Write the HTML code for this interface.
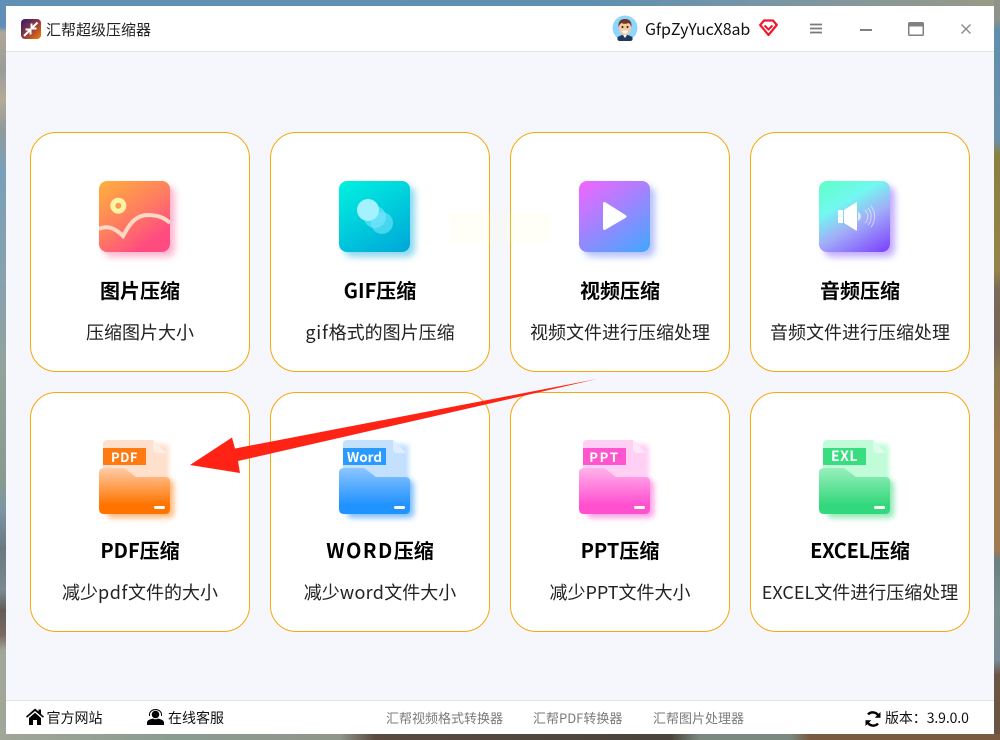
<!DOCTYPE html>
<html lang="zh"><head><meta charset="utf-8"><title>汇帮超级压缩器</title>
<style>
*{box-sizing:border-box;margin:0;padding:0}
html,body{width:1000px;height:740px;overflow:hidden}
body{position:relative;background:#7a8a88;font-family:"Noto Sans CJK SC","Liberation Sans",sans-serif;color:#111}
.abs,.card,.t,svg{position:absolute}
em{font-style:normal}
.bgt{left:0;top:0;width:1000px;height:7px;background:linear-gradient(90deg,#6090b4 0,#6090b0 60%,#7a96a4 78%,#9a9a86 100%)}
.bgl{left:0;top:0;width:6px;height:740px;background:linear-gradient(180deg,#6090b8 0,#6090b8 27px,#b0a898 32px,#9a9c98 70px,#b4aa98 100px,#909a9c 130px,#7a9fb8 170px,#8aa2ac 300px,#93a39b 370px,#8a9a90 480px,#7a96a4 510px,#6a7880 550px,#7a8a90 590px,#645c58 610px,#7a6a60 635px,#a0a698 650px,#a0a698 740px)}
.bgr{left:994px;top:0;width:6px;height:740px;background:linear-gradient(180deg,#8f9288 0,#8f9288 20px,#5f8fb0 30px,#6a90a8 140px,#8a8040 155px,#94844a 270px,#7a6a58 290px,#78665a 345px,#8a7a50 370px,#a07a50 440px,#a07a50 550px,#6a8080 560px,#7a9090 610px,#7a8a98 660px,#6a5545 675px,#6a5545 740px)}
.bgb{left:0;top:734px;width:1000px;height:6px;background:linear-gradient(90deg,#a0a698 0,#8a9c90 170px,#90968a 340px,#5a4a40 375px,#4a443c 670px,#7a8a80 700px,#7a8a80 790px,#7a5a40 810px,#7a5a40 100%)}
.win{left:6px;top:6px;width:988px;height:728px;background:#f6f7fc}
.head{left:6px;top:6px;width:988px;height:46px;background:#fff;border-bottom:1px solid #e3e4e8}
.foot{left:6px;top:700px;width:988px;height:34px;background:#fff;border-top:1px solid #e3e4e8}
.card{width:220px;height:240px;background:#fff;border:1px solid #f7a90c;border-radius:26px;text-align:center}
.card b{position:absolute;left:-1px;width:220px;top:143px;font-size:20px;line-height:28px;font-weight:700;color:#000;white-space:nowrap}
.card span{position:absolute;left:-1px;width:220px;top:186px;font-size:18px;line-height:26px;color:#222;white-space:nowrap}
.t{white-space:nowrap;line-height:20px}
.ico{width:71px;height:71px;border-radius:8px}
.lb{position:absolute;width:43px;height:17px;color:#fff;font-weight:700;font-size:13px;line-height:17px;text-align:center}
</style></head><body>
<div class="abs bgt"></div><div class="abs bgl"></div><div class="abs bgr"></div><div class="abs bgb"></div>
<div class="abs win"></div>
<div class="abs head"></div>

<svg style="left:21px;top:19px" width="20" height="20" viewBox="0 0 20 20">
<defs><linearGradient id="lg" x1="0" y1="0" x2="1" y2="1"><stop offset="0" stop-color="#33186e"/><stop offset=".5" stop-color="#8a3a40"/><stop offset="1" stop-color="#ff7a00"/></linearGradient></defs>
<rect width="20" height="20" rx="4" fill="url(#lg)"/>
<path d="M16.500 3.500L11.500 8.500M10.500 4.500V9.500H15.500M3 17L8.500 11.500M4.500 10.500H9.500V15.500" stroke="#fff" stroke-width="2" fill="none"/>
</svg>
<div class="t" style="left:46px;top:20px;font-size:15px;color:#222">汇帮超级压缩器</div>

<svg style="left:612px;top:15px" width="26" height="26" viewBox="0 0 26 26">
<circle cx="13" cy="13" r="12.500" fill="#8fd6ff"/>
<path d="M5.500 25a12.500 12.500 0 0 0 15 0V22L16 20H10L5.500 22z" fill="#1f3a5c"/>
<path d="M11 20l2 3 2-3z" fill="#fff"/>
<ellipse cx="13" cy="13" rx="6" ry="7" fill="#f6c9a4"/>
<path d="M6.500 12C6 5 10 4 13 4s7 1 6.500 8c-1-2-1.500-3.500-3-4-2 1-5 1-7 0-1.500 1-2 2-3 4z" fill="#6a3a22"/>
<circle cx="10.500" cy="12" r="1" fill="#2a1a10"/><circle cx="15.500" cy="12" r="1" fill="#2a1a10"/>
<path d="M10 15.500h6a3 3 0 0 1-6 0z" fill="#fff"/>
</svg>
<div class="t" style="left:645px;top:18px;font-size:16px;color:#111;letter-spacing:-.1px">GfpZyYucX8ab</div>
<svg style="left:759px;top:19px" width="19" height="18" viewBox="0 0 19 18">
<path d="M5 1.500H14L17.800 6 9.500 16 1.200 6z" fill="none" stroke="#f0182c" stroke-width="2.200" stroke-linejoin="round"/>
<path d="M5.500 6.500L9.500 10.500 13.500 6.500" fill="none" stroke="#f0182c" stroke-width="2"/>
</svg>
<svg style="left:810px;top:23px" width="12" height="11" viewBox="0 0 12 11"><path d="M0 1.500H12M0 5.500H12M0 9.500H12" stroke="#7a7a7a" stroke-width="1.700"/></svg>
<div class="abs" style="left:860px;top:29px;width:12px;height:2px;background:#808080"></div>
<svg style="left:908px;top:22px" width="16" height="14" viewBox="0 0 16 14"><rect x=".75" y=".75" width="14.500" height="12.500" rx="1" fill="#fff" stroke="#808080" stroke-width="1.500"/><rect x="1" y="1" width="14" height="3.500" fill="#808080"/></svg>
<svg style="left:961px;top:24px" width="10" height="10" viewBox="0 0 10 10"><path d="M.5.500L9.500 9.500M9.500.500L.5 9.500" stroke="#8a8a8a" stroke-width="1.400"/></svg>

<div class="card" style="left:30px;top:132px"><b>图片压缩</b><span>压缩图片大小</span></div>
<div class="card" style="left:270px;top:132px"><b>GIF压缩</b><span><em style="letter-spacing:.8px">gif</em>格式的图片压缩</span></div>
<div class="card" style="left:510px;top:132px"><b>视频压缩</b><span>视频文件进行压缩处理</span></div>
<div class="card" style="left:750px;top:132px"><b>音频压缩</b><span>音频文件进行压缩处理</span></div>
<div class="card" style="left:30px;top:392px"><b>PDF压缩</b><span>减少<em style="letter-spacing:.6px">pdf</em>文件的大小</span></div>
<div class="card" style="left:270px;top:392px"><b><em style="letter-spacing:1.500px">WORD</em>压缩</b><span>减少<em style="letter-spacing:.3px">word</em>文件大小</span></div>
<div class="card" style="left:510px;top:392px"><b>PPT压缩</b><span>减少PPT文件大小</span></div>
<div class="card" style="left:750px;top:392px"><b><em style="letter-spacing:-.3px">EXCEL</em>压缩</b><span>EXCEL文件进行压缩处理</span></div>

<div class="abs" style="left:450px;top:213px;width:100px;height:30px;background:rgba(255,255,190,.11)"></div>

<!-- image -->
<div class="abs ico" style="left:99px;top:181px;background:linear-gradient(145deg,#ffb03c 0,#ff7a62 50%,#ff4c80 80%);box-shadow:5px 5px 7px rgba(255,90,150,.45)"></div>
<svg style="left:99px;top:181px" width="71" height="71" viewBox="0 0 71 71">
<circle cx="19.300" cy="24.700" r="5.500" fill="#ff9a50" stroke="#fff3a4" stroke-width="5"/>
<path d="M0 48C8 44 16 47 24 55C30 44 36 34 49 34C58 34 66 37 71 42" fill="none" stroke="#fcd9c4" stroke-width="4"/>
</svg>
<!-- gif -->
<div class="abs ico" style="left:339px;top:181px;background:linear-gradient(150deg,#00f2e0 0,#00a6d8 100%);box-shadow:5px 5px 7px rgba(0,170,220,.45)"></div>
<svg style="left:339px;top:181px" width="71" height="71" viewBox="0 0 71 71">
<circle cx="43" cy="42" r="11" fill="#7ee8ff" opacity=".55"/>
<circle cx="36" cy="36" r="11" fill="#7ee8ff" opacity=".6"/>
<circle cx="29" cy="29" r="11" fill="#a4f2ff"/>
</svg>
<!-- video -->
<div class="abs ico" style="left:579px;top:181px;background:linear-gradient(145deg,#f464ff 0,#40a8ff 100%);box-shadow:5px 5px 7px rgba(90,120,255,.45)"></div>
<svg style="left:579px;top:181px" width="71" height="71" viewBox="0 0 71 71"><path d="M25.500 22.500L46 35.500 25.500 47.500z" fill="#fff" stroke="#fff" stroke-width="3" stroke-linejoin="round"/></svg>
<!-- audio -->
<div class="abs ico" style="left:819px;top:181px;background:linear-gradient(150deg,#5effc4 0,#72f8f0 32%,#a2aef8 58%,#7a3cff 100%);box-shadow:5px 5px 7px rgba(120,70,255,.45)"></div>
<svg style="left:819px;top:181px" width="71" height="71" viewBox="0 0 71 71">
<path d="M19 29H24V42H19z" fill="#fff"/><path d="M25 29L37 21.500Q38 21 38 22V49Q38 50 37 49.500L25 42z" fill="#fff"/>
<path d="M39 31a5 5 0 0 1 0 9" fill="#fff" opacity=".7"/>
<path d="M46 29a9 9 0 0 1 0 13M49 27a13 13 0 0 1 0 17M52 25a17 17 0 0 1 0 21" fill="none" stroke="#fff" stroke-width="1" opacity=".55"/>
</svg>

<!-- pdf -->
<svg style="left:89px;top:430px" width="100" height="100" viewBox="0 0 100 100">
<defs>
<filter id="b" x="-30%" y="-30%" width="160%" height="160%"><feGaussianBlur stdDeviation="3"/></filter>
<filter id="c" x="-30%" y="-30%" width="160%" height="160%"><feGaussianBlur stdDeviation="2.500"/></filter>
<linearGradient id="g1" x1="0" y1="0" x2="0" y2="1"><stop offset="0" stop-color="#ffcba6"/><stop offset=".8" stop-color="#ff7400"/></linearGradient>
<linearGradient id="g2" x1="0" y1="0" x2="0" y2="1"><stop offset="0" stop-color="#8cc5ff"/><stop offset=".8" stop-color="#2193ff"/></linearGradient>
<linearGradient id="g3" x1="0" y1="0" x2="0" y2="1"><stop offset="0" stop-color="#ffb2ea"/><stop offset=".8" stop-color="#ff50d0"/></linearGradient>
<linearGradient id="g4" x1="0" y1="0" x2="0" y2="1"><stop offset="0" stop-color="#98efbc"/><stop offset=".8" stop-color="#34d87c"/></linearGradient>
</defs>
<rect x="20" y="14" width="60" height="42" rx="4" fill="#ffe0cc" filter="url(#c)"/>
<rect x="18" y="50" width="67" height="38" rx="5" fill="#ff8a20" opacity=".6" filter="url(#b)"/>
<path d="M18 10H64L77 23V60H14V14q0-4 4-4z" fill="#ffe0cc"/><path d="M64 10L77 23H68q-4 0-4-4z" fill="#ffeee3"/>
<path d="M10 43q0-5 5-5H35L47 47H76q5 0 5 5V79q0 5-5 5H15q-5 0-5-5z" fill="url(#g1)"/>
<rect x="65" y="76" width="11" height="3" rx="1.500" fill="#fff"/>
</svg>
<div class="lb" style="left:103px;top:448px;background:#ff7a10;letter-spacing:.5px">PDF</div>
<!-- word -->
<svg style="left:329px;top:430px" width="100" height="100" viewBox="0 0 100 100">
<rect x="20" y="14" width="60" height="42" rx="4" fill="#c4e0ff" filter="url(#c)"/>
<rect x="18" y="50" width="67" height="38" rx="5" fill="#2a95ff" opacity=".6" filter="url(#b)"/>
<path d="M18 10H64L77 23V60H14V14q0-4 4-4z" fill="#c4e0ff"/><path d="M64 10L77 23H68q-4 0-4-4z" fill="#deedff"/>
<path d="M10 43q0-5 5-5H35L47 47H76q5 0 5 5V79q0 5-5 5H15q-5 0-5-5z" fill="url(#g2)"/>
<rect x="65" y="76" width="11" height="3" rx="1.500" fill="#fff"/>
</svg>
<div class="lb" style="left:343px;top:448px;background:#2a9aff;font-size:13.500px">Word</div>
<!-- ppt -->
<svg style="left:569px;top:430px" width="100" height="100" viewBox="0 0 100 100">
<rect x="20" y="14" width="60" height="42" rx="4" fill="#ffd0f4" filter="url(#c)"/>
<rect x="18" y="50" width="67" height="38" rx="5" fill="#ff50d0" opacity=".55" filter="url(#b)"/>
<path d="M18 10H64L77 23V60H14V14q0-4 4-4z" fill="#ffd0f4"/><path d="M64 10L77 23H68q-4 0-4-4z" fill="#ffe6f9"/>
<path d="M10 43q0-5 5-5H35L47 47H76q5 0 5 5V79q0 5-5 5H15q-5 0-5-5z" fill="url(#g3)"/>
<rect x="65" y="76" width="11" height="3" rx="1.500" fill="#fff"/>
</svg>
<div class="lb" style="left:583px;top:448px;background:#ff55cf;letter-spacing:1.800px">PPT</div>
<!-- exl -->
<svg style="left:809px;top:430px" width="100" height="100" viewBox="0 0 100 100">
<rect x="20" y="14" width="60" height="42" rx="4" fill="#c0fcd8" filter="url(#c)"/>
<rect x="18" y="50" width="67" height="38" rx="5" fill="#34d87c" opacity=".55" filter="url(#b)"/>
<path d="M18 10H64L77 23V60H14V14q0-4 4-4z" fill="#c0fcd8"/><path d="M64 10L77 23H68q-4 0-4-4z" fill="#dcfde9"/>
<path d="M10 43q0-5 5-5H35L47 47H76q5 0 5 5V79q0 5-5 5H15q-5 0-5-5z" fill="url(#g4)"/>
<rect x="65" y="76" width="11" height="3" rx="1.500" fill="#fff"/>
</svg>
<div class="lb" style="left:823px;top:448px;background:#38dd80;font-size:14px;letter-spacing:.5px">EXL</div>

<!-- arrow -->
<svg style="left:0;top:0" width="1000" height="740" viewBox="0 0 1000 740"><path d="M190 465L232 437.500 235 448.500 597 379 238 461 240 473z" fill="#fe2315"/></svg>

<div class="abs foot"></div>
<svg style="left:26px;top:708px" width="18" height="17" viewBox="0 0 18 17"><path d="M0 8.500L9 .5l3.500 3V1.500H15V6l3 2.500-1 1.200L9 3 1 9.700z" fill="#000"/><path d="M3 10L9 4.800 15 10v7H11V12H7V17H3z" fill="#000"/></svg>
<div class="t" style="left:46.500px;top:708px;font-size:14px;color:#111">官方网站</div>
<svg style="left:147px;top:709px" width="17" height="16" viewBox="0 0 17 16"><circle cx="8.500" cy="5.500" r="3.800" fill="#000"/><path d="M2.500 7V5.500a6 5 0 0 1 12 0V7" fill="none" stroke="#000" stroke-width="1"/><path d="M0 16v-2.500C0 11 4 10 6 9.500c1.500 1 3.500 1 5 0 2 .5 6 1.500 6 4V16z" fill="#000"/></svg>
<div class="t" style="left:168px;top:708px;font-size:14px;color:#111">在线客服</div>
<div class="t" style="left:386px;top:708px;font-size:13px;color:#7a7a7a">汇帮视频格式转换器</div>
<div class="t" style="left:533px;top:708px;font-size:13px;color:#7a7a7a">汇帮PDF转换器</div>
<div class="t" style="left:653px;top:708px;font-size:13px;color:#7a7a7a">汇帮图片处理器</div>
<svg style="left:865px;top:711px" width="16" height="16" viewBox="0 0 16 16"><path d="M14 6A6.500 6.500 0 0 0 3 3.500M2 10a6.500 6.500 0 0 0 11 2.500" fill="none" stroke="#000" stroke-width="2.400"/><path d="M15.500 1V6.800H9.700zM.5 15V9.200H6.300z" fill="#000"/></svg>
<div class="t" style="left:885px;top:708px;font-size:14px;color:#111;letter-spacing:-.1px">版本：3.9.0.0</div>
</body></html>
